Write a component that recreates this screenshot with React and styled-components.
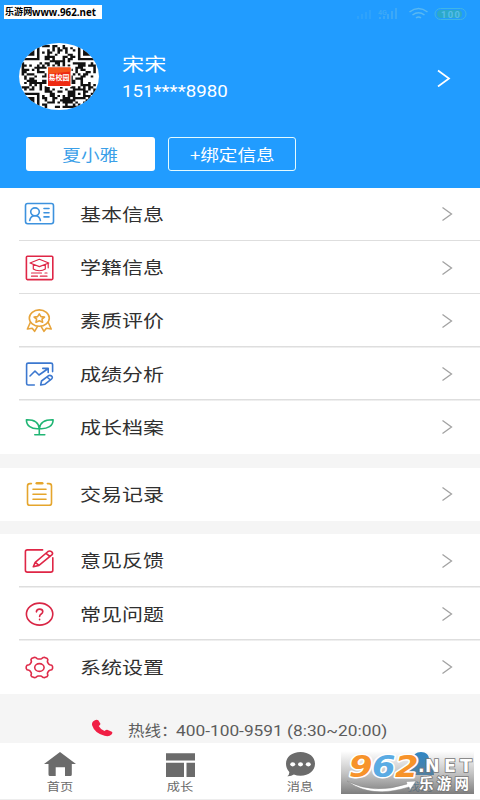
import React from "react";
import styled, { createGlobalStyle } from "styled-components";

const GlobalStyle = createGlobalStyle`
  * {
    box-sizing: border-box;
  }

  body {
    margin: 0;
    background: #f5f5f5;
    font-family: "Noto Sans CJK SC", "Noto Sans", sans-serif;
  }
`;

const Screen = styled.div`
  position: relative;
  display: flex;
  flex-direction: column;
  width: 480px;
  height: 800px;
  overflow: hidden;
  background: #f5f5f5;
`;

// Text that is wider than the font's natural proportions
const Wide = styled.span`
  display: inline-block;
  white-space: nowrap;
  transform: scaleX(${(props) => props.$x || 1.2});
  transform-origin: ${(props) => props.$origin || "left"} center;
`;

/* ---------- header ---------- */

const Header = styled.header`
  display: flex;
  flex-direction: column;
  height: 188px;
  background: #219cff;
  color: #fff;
`;

const StatusBar = styled.div`
  display: flex;
  justify-content: flex-end;
  height: 43px;
  padding: 7px 12px 0 0;
`;

const Profile = styled.div`
  display: flex;
  align-items: center;
  height: 67px;
  padding: 0 29px 0 19px;
`;

const Avatar = styled.svg`
  width: 80px;
  height: 67px;
  border-radius: 50%;
  background: #fff;
`;

const ProfileText = styled.div`
  display: flex;
  flex: 1;
  flex-direction: column;
  padding: 2px 0 0 23px;
`;

const UserName = styled.div`
  height: 29px;
  font-size: 18.5px;
  line-height: 28px;
`;

const Phone = styled.div`
  height: 28px;
  font-family: Roboto, "Noto Sans", sans-serif;
  font-size: 16px;
  line-height: 28px;
`;

const Buttons = styled.div`
  display: flex;
  gap: 13px;
  padding: 27px 0 0 26px;
`;

const Button = styled.button`
  width: ${(props) => (props.$outline ? "128px" : "129px")};
  height: 34px;
  padding: 0;
  border: ${(props) => (props.$outline ? "1.5px solid #e4fbff" : "none")};
  border-radius: 3px;
  background: ${(props) => (props.$outline ? "transparent" : "#fff")};
  color: ${(props) => (props.$outline ? "#fff" : "#3b9fe8")};
  font-family: inherit;
  font-size: 15.5px;
  line-height: 30px;
`;

/* ---------- menu ---------- */

const Group = styled.ul`
  margin: 0 0 13.5px;
  padding: 0;
  background: #fff;
  list-style: none;
`;

const Row = styled.li`
  display: flex;
  align-items: center;
  height: 53.25px;
  padding-left: 24px;
  background: linear-gradient(#dedede, #dedede) no-repeat 19px 100% / 100%
    ${(props) => (props.$last ? "0" : "1.5px")};
`;

const RowIcon = styled.svg`
  width: 31px;
  height: 26px;
  margin-right: 24.5px;
  fill: none;
  stroke: ${(props) => props.$color};
  stroke-width: 1.6;
  stroke-linecap: round;
  stroke-linejoin: round;
`;

const RowLabel = styled.div`
  flex: 1;
  padding-bottom: 1px;
  color: #303030;
  font-size: 17.5px;
  line-height: 26px;
`;

const RowArrow = styled.svg`
  width: 12px;
  height: 16px;
  margin-right: 27px;
  fill: none;
  stroke: #a2a2a2;
  stroke-width: 1.3;
`;

/* ---------- footer ---------- */

const Hotline = styled.div`
  display: flex;
  align-items: center;
  height: 49px;
  margin-top: -13.5px;
  padding: 24px 0 0 91px;
  color: #5c5c5c;
  font-size: 14.5px;
`;

const PhoneIcon = styled.svg`
  width: 22px;
  height: 18px;
  margin-bottom: 5px;
`;

const HotlineText = styled.div`
  display: flex;
  margin-left: 15px;
  line-height: 22px;
`;

const HotlineLabel = styled.div`
  width: 48px;
`;

const HotlineNumber = styled.div`
  font-family: Roboto, "Noto Sans", sans-serif;
  font-size: 15px;
  line-height: 24px;
`;

const TabBar = styled.nav`
  display: flex;
  height: 57px;
  border-bottom: 1px solid #ededed;
  background: #fff;
`;

const Tab = styled.div`
  display: flex;
  flex: 1;
  flex-direction: column;
  align-items: center;
  padding-top: 8px;
  color: ${(props) => (props.$active ? "#2e87c6" : "#6b6b6b")};
  font-size: 11px;
  line-height: 17px;
`;

const TabIcon = styled.svg`
  width: 34px;
  height: 26px;
  margin-bottom: 1px;
  fill: currentColor;
`;

/* ---------- site marks lying over the page ---------- */

const SiteTag = styled.div`
  position: absolute;
  top: 5px;
  left: 4px;
  display: flex;
  align-items: center;
  width: 98px;
  height: 14px;
  padding-left: 1px;
  background: #fff;
  color: #000;
  font-size: 9px;
  font-weight: 700;
  line-height: 14px;
`;

const SiteTagName = styled.span`
  width: 30px;
`;

const SiteTagUrl = styled.span`
  font-family: "Open Sans", "Noto Sans", sans-serif;
  font-size: 11px;
`;

const SiteLogo = styled.svg`
  position: absolute;
  top: 741px;
  left: 341px;
  width: 139px;
  height: 59px;
`;

const QR_SIZE = 29;

// finder and alignment squares are concentric rings
const ring = (dx, dy, radius) => {
  const d = Math.max(Math.abs(dx), Math.abs(dy));
  return d === radius || d <= radius - 2;
};

const isDark = (x, y) => {
  const corners = [
    [3, 3],
    [25, 3],
    [3, 25],
  ];
  for (const [cx, cy] of corners) {
    if (Math.abs(x - cx) <= 4 && Math.abs(y - cy) <= 4) {
      return Math.max(Math.abs(x - cx), Math.abs(y - cy)) < 4 && ring(x - cx, y - cy, 3);
    }
  }
  if (Math.abs(x - 22) <= 2 && Math.abs(y - 22) <= 2) return ring(x - 22, y - 22, 2);
  const n = Math.sin(x * 127.1 + y * 311.7) * 43758.5453;
  return n - Math.floor(n) < 0.48;
};

const qrPath = () => {
  let d = "";
  for (let y = 0; y < QR_SIZE; y++) {
    for (let x = 0; x < QR_SIZE; x++) {
      if (isDark(x, y)) d += `M${x} ${y}h1v1h-1z`;
    }
  }
  return d;
};

const QrAvatar = () => (
  <Avatar viewBox="0 0 80 67">
    <path d={qrPath()} transform="translate(2.6 2) scale(2.56 2.17)" fill="#111" />
    <rect x="27.5" y="23.5" width="25" height="20.5" fill="#fff" />
    <rect x="29" y="24.5" width="22.5" height="18.5" fill="#ee2a12" />
    <path d="M29 24.5h22.5v4L29 31z" fill="#f4561b" />
    <text
      x="29.5"
      y="37"
      fill="#fff"
      fontSize="7.2"
      fontWeight="700"
      textLength="21"
      lengthAdjust="spacingAndGlyphs"
    >
      易校园
    </text>
  </Avatar>
);

const gearPath = () => {
  const points = [];
  for (let a = 0; a < 360; a += 6) {
    const t = (a * Math.PI) / 180;
    const r = 0.9 + 0.12 * Math.tanh(2.2 * Math.cos(6 * t));
    points.push(`${(15.4 + 13 * r * Math.cos(t)).toFixed(2)} ${(13.5 + 10.9 * r * Math.sin(t)).toFixed(2)}`);
  }
  return `M${points.join("L")}z`;
};

const icons = {
  card: (
    <>
      <rect x="1.5" y="2.5" width="28" height="20.3" rx="2.2" />
      <ellipse cx="11" cy="10.8" rx="4.3" ry="3.9" />
      <path d="M5.7 19.5c.6-3 2.4-4.8 5.3-4.8s4.8 1.8 5.4 4.8M20 7.5h5M20 11.7h5M20 15.9h5" />
    </>
  ),
  school: (
    <>
      <rect x="2.4" y="1.2" width="26.4" height="23.4" rx="1" />
      <path
        d="M6 8l9.4-3.7L24.8 8l-9.4 3.6zM9.3 9.5v4.6c3 2.2 9 2.2 12 0V9.5M24.2 8.4v4.4M7.5 18h10M21 18h2M7.5 21.2h6M16.3 21.2H23"
        strokeWidth="1.2"
      />
    </>
  ),
  medal: (
    <>
      <ellipse cx="15.3" cy="10.1" rx="10" ry="8.2" />
      <path d="M15.3 5.9l1.7 2.7 3.5.5-2.5 2.1.6 3-3.3-1.4-3.3 1.4.6-3-2.5-2.1 3.5-.5z" />
      <path d="M6.4 14.2L3.4 21l4.8-.8 2.4 3.1 2.8-4.7M24.2 14.2l3 6.8-4.8-.8-2.4 3.1-2.8-4.7" />
    </>
  ),
  chart: (
    <>
      <path d="M10.3 24H4.2q-1.6 0-1.6-1.5V3.6q0-1.5 1.6-1.5h22.7q1.7 0 1.7 1.5v7M6 15l5-5 4 4 8.5-6M18.8 7.4h5.4v4" />
      <path d="M16.7 24l.8-4 6.8-5.2q1.6-1 3.2.2t.2 2.8l-6.7 5.4zM23 16l3.4 3" />
    </>
  ),
  sprout: (
    <path d="M15.3 14.5v6.1M10.8 20.8h10M15.3 14.6C14.8 9 10.2 5.5 2.4 5.7c0 6 4.6 9.6 12.9 8.9zM15.3 14.6c.6-5.6 5.4-9.1 13.8-8.9 0 6-5 9.6-13.8 8.9z" />
  ),
  list: (
    <>
      <path d="M7.4 2.6H6q-2.5 0-2.5 2.3v17q0 2.4 2.5 2.4h19q2.5 0 2.5-2.4v-17q0-2.3-2.5-2.3h-1.6M9 8.3h13M9 13.3h13M9 18.3h13" />
      <path d="M12.8 2.3h5.4" strokeWidth="2.6" />
    </>
  ),
  edit: (
    <>
      <path d="M18.6 1.9H3.4q-2 0-2 1.9v18.4q0 1.9 2 1.9h23.3q2.1 0 2.1-1.9V9.7" />
      <path d="M9.3 18.8l1.9-4.5L24 3.5q1.7-1.2 3.5.2t.6 3L15 17.4zM22 5.4l4 3.1M11.4 14.3l3.5 3" />
    </>
  ),
  question: (
    <>
      <ellipse cx="15.6" cy="13.1" rx="13.2" ry="11" />
      <path d="M12.4 10.9q.1-2.8 3.2-2.8t3.2 2.5q0 1.4-1.6 2.4t-1.6 2.4M15.6 18.4v.3" />
    </>
  ),
  gear: (
    <>
      <path d={gearPath()} />
      <ellipse cx="15.4" cy="13.5" rx="4.7" ry="3.9" />
    </>
  ),
};

const groups = [
  [
    { icon: "card", color: "#3d92de", label: "基本信息" },
    { icon: "school", color: "#df2646", label: "学籍信息" },
    { icon: "medal", color: "#e7a43b", label: "素质评价" },
    { icon: "chart", color: "#3c78cf", label: "成绩分析" },
    { icon: "sprout", color: "#20b574", label: "成长档案" },
  ],
  [{ icon: "list", color: "#e5a52c", label: "交易记录" }],
  [
    { icon: "edit", color: "#df2646", label: "意见反馈" },
    { icon: "question", color: "#d92645", label: "常见问题" },
    { icon: "gear", color: "#df2c4a", label: "系统设置" },
  ],
];

const tabs = [
  {
    label: "首页",
    icon: <path d="M17 1L33 13h-4.2v10.5q0 1.5-1.5 1.5H22v-8.8h-9.3V25H7q-1.5 0-1.5-1.5V13H1z" />,
  },
  {
    label: "成长",
    icon: <path d="M3 2.3h29v7.2H3zM3 11.7h18V26H3zM23.5 11.7H32V26h-8.5z" />,
  },
  {
    label: "消息",
    icon: (
      <>
        <path d="M17.5 1C26 1 32 6 32 12.8s-6 12-14.5 12q-3.7 0-6.6-1.3Q8 25.5 4.3 25.2q2.2-1.5 2-4.1Q3 17.5 3 12.8C3 6 9 1 17.5 1z" />
        <g fill="#fff">
          <ellipse cx="9.7" cy="13.3" rx="2.5" ry="2.1" />
          <ellipse cx="17.5" cy="13.3" rx="2.5" ry="2.1" />
          <ellipse cx="25.3" cy="13.3" rx="2.5" ry="2.1" />
        </g>
      </>
    ),
  },
  {
    label: "我的",
    active: true,
    icon: <path d="M18 1c5 0 8 3 8 7 0 3-1 5-3 6.5q8 2 8 9.5H4q0-7.5 8-9.5-2-3-2-6.500c0-4 3-7 8-7z" />,
  },
];

const StatusIcons = () => (
  <svg width="116" height="14" viewBox="0 0 116 14">
    <g fill="#45adf5" opacity="0.75">
      <path d="M5 12V9h2v3zM9 12V7h2v5zM13 12V5h2v7zM17 12V3h2v9z" opacity="0.5" />
      <path d="M27 12v-2h2v2zM31 12V9h2v3zM35 12V7h2v5zM39 12V4h2v8zM43 12V1h2v11z" />
      <text x="30" y="8" fontSize="7" fontFamily="Roboto" fontWeight="700" transform="translate(-4 0)">
        4G
      </text>
    </g>
    <g fill="none" stroke="#58b8f2" strokeWidth="1.5">
      <path d="M56.5 5q9-7 18 0M59.5 8q6-4.5 12 0M63 10.800q2.500-1.800 5 0" transform="translate(1 0)" />
    </g>
    <rect x="83" y="1.5" width="31" height="11" rx="5.5" fill="none" stroke="#40b5e5" />
    <rect x="85" y="3" width="25" height="8" rx="4" fill="#2ca9c9" />
    <text x="89" y="10.5" fill="#56bdec" fontSize="9.5" fontWeight="700" fontFamily="Roboto" textLength="19">
      100
    </text>
  </svg>
);

const digits = [
  { text: "9", x: 8, color: "#f7932a" },
  { text: "6", x: 31, color: "#5aabe3" },
  { text: "2", x: 54, color: "#f7932a" },
];

const Watermark = () => (
  <SiteLogo viewBox="0 -10 139 59">
    <defs>
      <linearGradient id="plate" x1="0" y1="0" x2="0" y2="1">
        <stop offset="0" stopColor="#777" stopOpacity="0" />
        <stop offset="0.5" stopColor="#777" stopOpacity="0.42" />
        <stop offset="1" stopColor="#6c6c6c" stopOpacity="0.88" />
      </linearGradient>
    </defs>
    <rect width="133" height="43" fill="url(#plate)" />
    <g
      fontFamily="DejaVu Sans, sans-serif"
      fontSize="30"
      fontWeight="700"
      fontStyle="italic"
      stroke="#fff"
      strokeWidth="3"
      paintOrder="stroke"
      strokeLinejoin="round"
    >
      {digits.map((digit) => (
        <text
          key={digit.text}
          x={digit.x}
          y="26"
          fill={digit.color}
          textLength="23.5"
          lengthAdjust="spacingAndGlyphs"
        >
          {digit.text}
        </text>
      ))}
    </g>
    <path d="M6 30q26 14 60 3l-1-2.500 10-.5-6 9-1-3q-38 12-62-6z" fill="#fff" stroke="#888" strokeWidth="0.5" />
    <g fill="#fff" stroke="#777" strokeWidth="1.6" paintOrder="stroke" fontWeight="700">
      <text x="77" y="21" fontFamily="DejaVu Sans, sans-serif" fontSize="17.5">
        .
      </text>
      <text
        x="84"
        y="21"
        fontFamily="DejaVu Sans, sans-serif"
        fontSize="17.5"
        textLength="47"
        lengthAdjust="spacing"
      >
        NET
      </text>
      <text x="78" y="38" fontSize="14.5" textLength="50">
        乐游网
      </text>
    </g>
  </SiteLogo>
);

const App = () => (
  <>
    <GlobalStyle />
    <Screen>
      <Header>
        <StatusBar>
          <StatusIcons />
        </StatusBar>
        <Profile>
          <QrAvatar />
          <ProfileText>
            <UserName>
              <Wide>宋宋</Wide>
            </UserName>
            <Phone>
              <Wide $x={1.168}>151****8980</Wide>
            </Phone>
          </ProfileText>
          <svg width="15" height="20" viewBox="0 0 15 20" fill="none" stroke="#fff" strokeWidth="1.7">
            <path d="M2 4l11 8-11 8" transform="translate(0 -0.5)" />
          </svg>
        </Profile>
        <Buttons>
          <Button>
            <Wide $origin="center">夏小雅</Wide>
          </Button>
          <Button $outline>
            <Wide $origin="center">+绑定信息</Wide>
          </Button>
        </Buttons>
      </Header>

      {groups.map((rows, index) => (
        <Group key={index}>
          {rows.map((row, i) => (
            <Row key={row.label} $last={i === rows.length - 1}>
              <RowIcon viewBox="0 0 31 26" $color={row.color}>
                {icons[row.icon]}
              </RowIcon>
              <RowLabel>
                <Wide>{row.label}</Wide>
              </RowLabel>
              <RowArrow viewBox="0 0 12 16">
                <path d="M1.5 1.5L10.5 8l-9 6.5" />
              </RowArrow>
            </Row>
          ))}
        </Group>
      ))}

      <Hotline>
        <PhoneIcon viewBox="0 0 22 18">
          <path
            d="M2 2.5Q5-.3 7.300 1.200l2 3.200q.5 1.300-1.600 2.500 1.800 3.500 5.800 5 2-1.600 3.300-1l4 1.900q1.300 1-.3 2.800-2.500 2.500-7 1.200Q3.500 14 1.200 6.500.5 4 2 2.500z"
            fill="#f01f45"
          />
        </PhoneIcon>
        <HotlineText>
          <HotlineLabel>
            <Wide $x={1.14}>热线：</Wide>
          </HotlineLabel>
          <HotlineNumber>
            <Wide $x={1.153}>400-100-9591 (8:30~20:00)</Wide>
          </HotlineNumber>
        </HotlineText>
      </Hotline>

      <TabBar>
        {tabs.map((tab) => (
          <Tab key={tab.label} $active={tab.active}>
            <TabIcon viewBox="0 0 34 26">{tab.icon}</TabIcon>
            <Wide $origin="center">{tab.label}</Wide>
          </Tab>
        ))}
      </TabBar>

      <SiteTag>
        <SiteTagName>
          <Wide $x={1.01}>乐游网</Wide>
        </SiteTagName>
        <SiteTagUrl>
          <Wide $x={0.89}>www.962.net</Wide>
        </SiteTagUrl>
      </SiteTag>
      <Watermark />
    </Screen>
  </>
);

export default App;
